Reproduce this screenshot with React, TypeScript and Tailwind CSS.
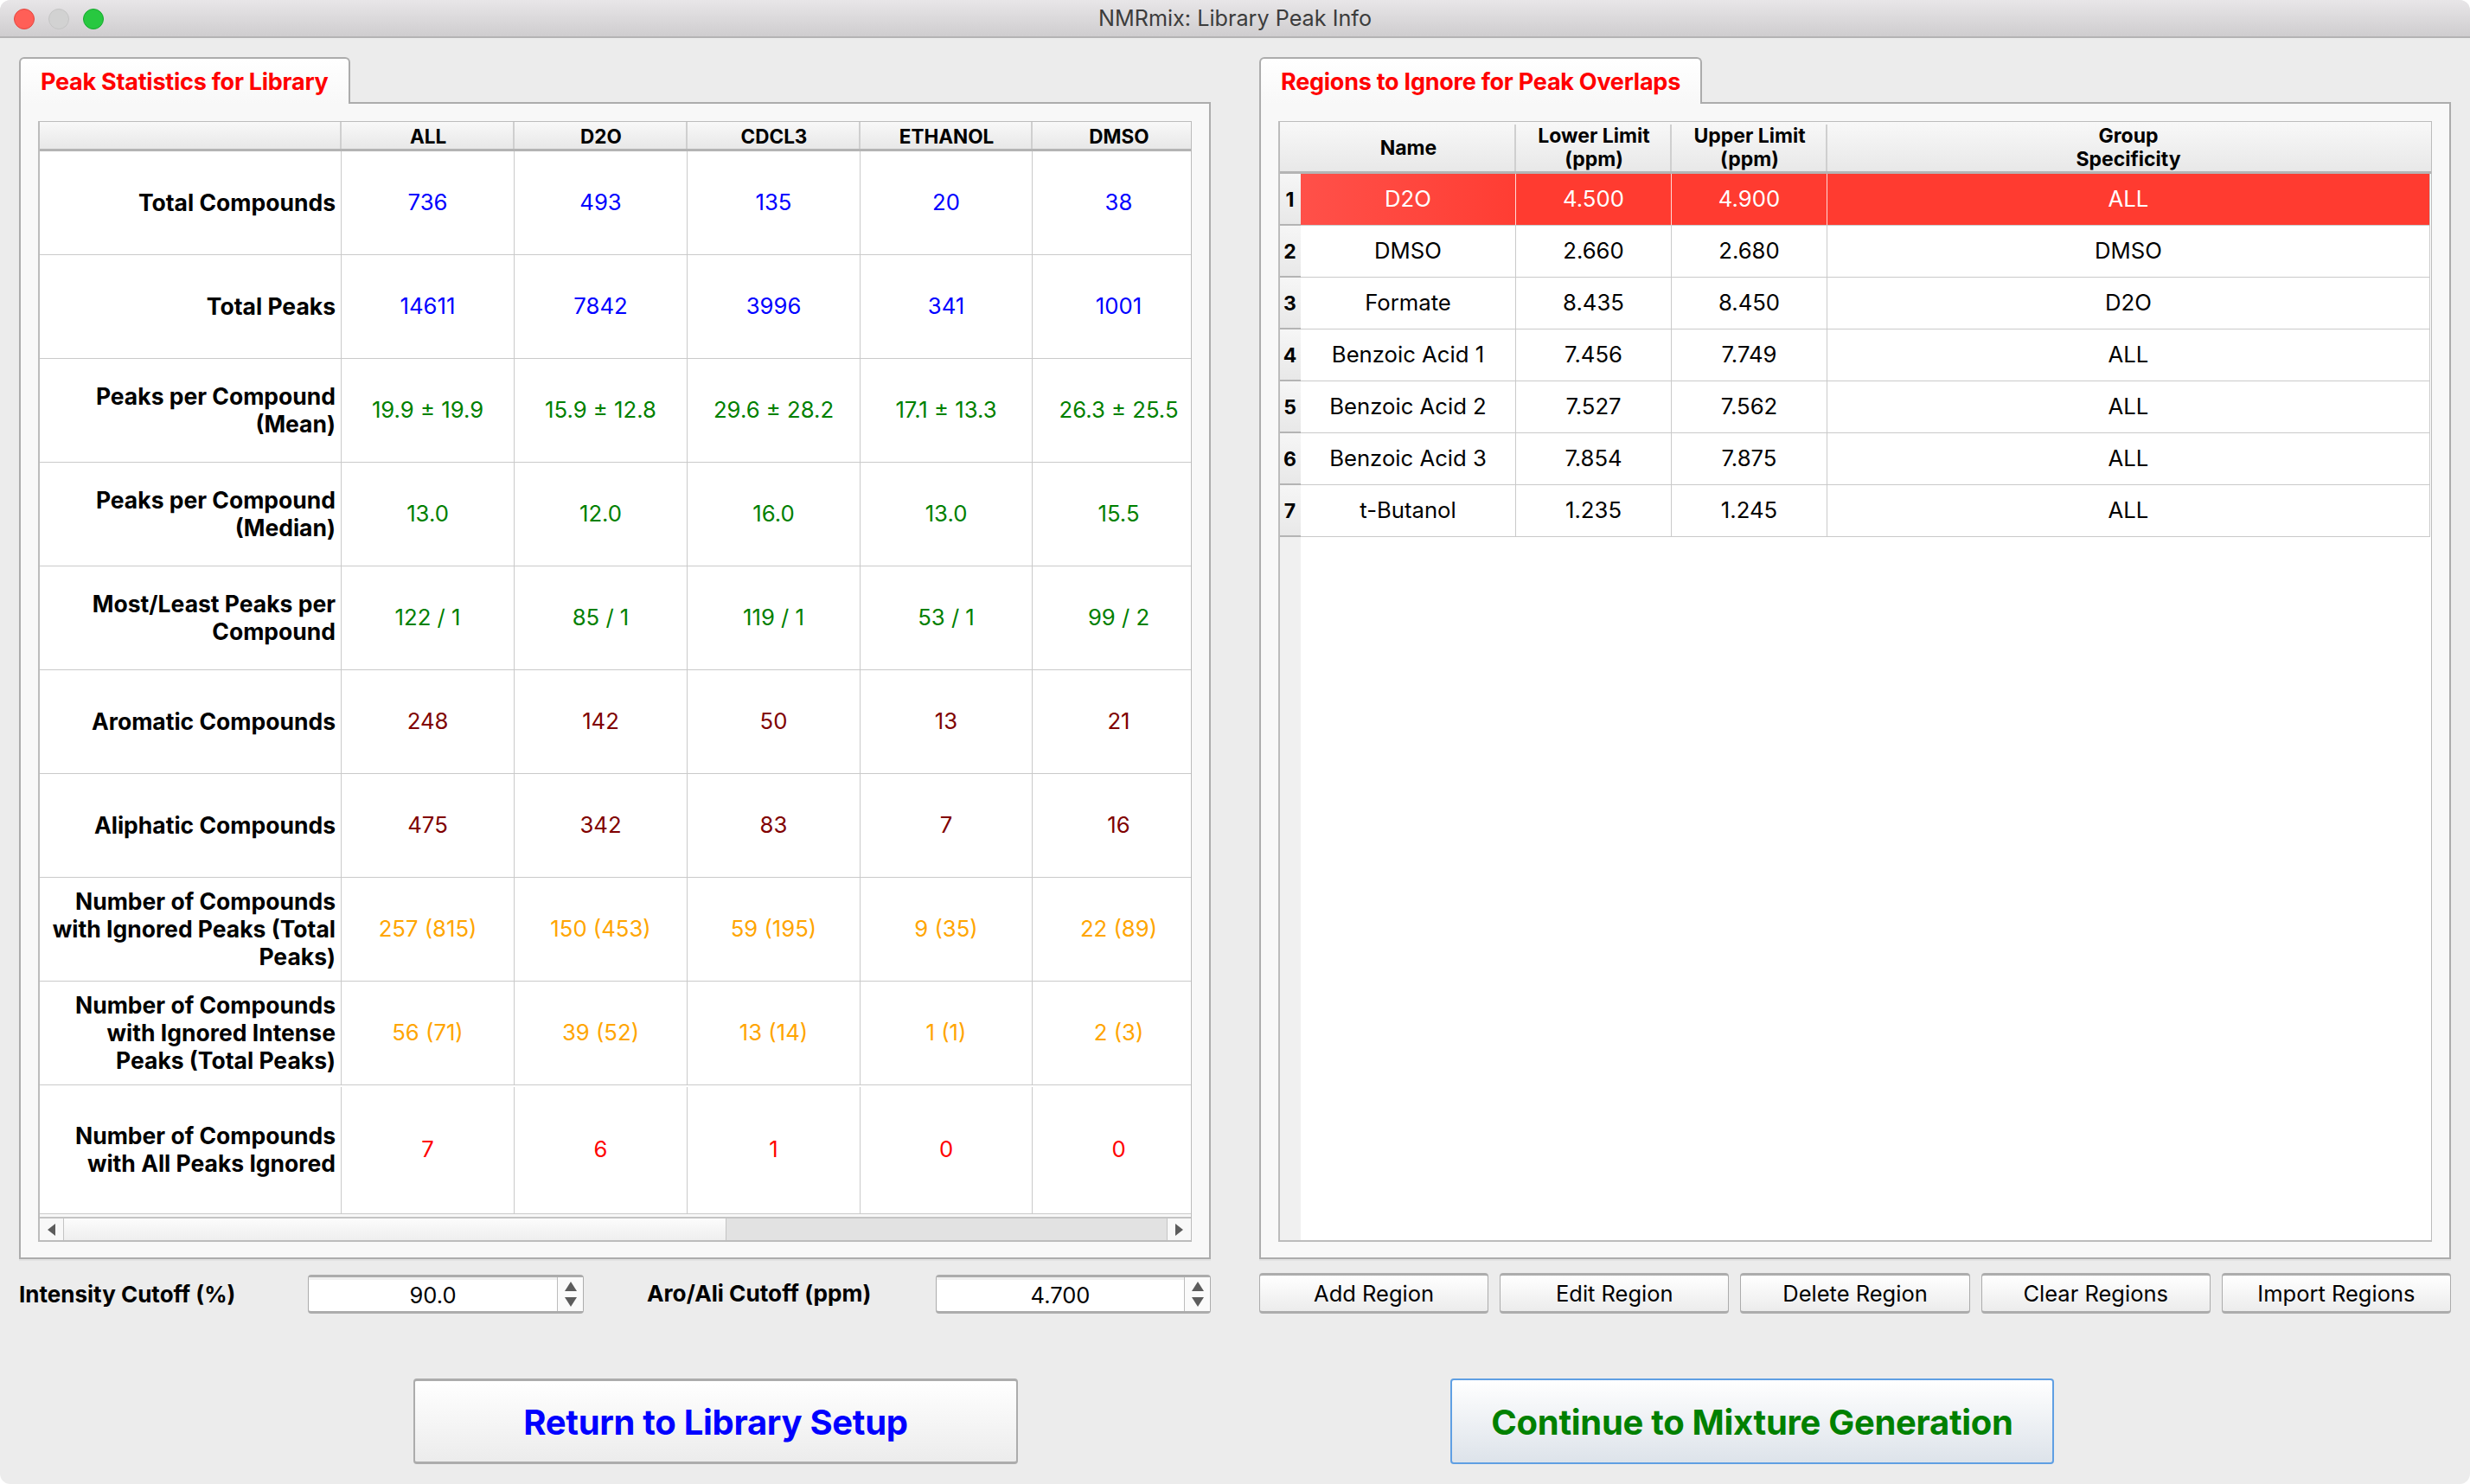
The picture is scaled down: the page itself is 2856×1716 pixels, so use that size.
const font = { fontFamily: "Inter, 'Noto Sans', sans-serif" };

const statRows = [
  { label: ["Total Compounds"], values: ["736", "493", "135", "20", "38"], color: "text-[#0000ff]" },
  { label: ["Total Peaks"], values: ["14611", "7842", "3996", "341", "1001"], color: "text-[#0000ff]" },
  { label: ["Peaks per Compound", "(Mean)"], values: ["19.9 ± 19.9", "15.9 ± 12.8", "29.6 ± 28.2", "17.1 ± 13.3", "26.3 ± 25.5"], color: "text-[#008000]" },
  { label: ["Peaks per Compound", "(Median)"], values: ["13.0", "12.0", "16.0", "13.0", "15.5"], color: "text-[#008000]" },
  { label: ["Most/Least Peaks per", "Compound"], values: ["122 / 1", "85 / 1", "119 / 1", "53 / 1", "99 / 2"], color: "text-[#008000]" },
  { label: ["Aromatic Compounds"], values: ["248", "142", "50", "13", "21"], color: "text-[#800000]" },
  { label: ["Aliphatic Compounds"], values: ["475", "342", "83", "7", "16"], color: "text-[#800000]" },
  { label: ["Number of Compounds", "with Ignored Peaks (Total", "Peaks)"], values: ["257 (815)", "150 (453)", "59 (195)", "9 (35)", "22 (89)"], color: "text-[#ffa500]" },
  { label: ["Number of Compounds", "with Ignored Intense", "Peaks (Total Peaks)"], values: ["56 (71)", "39 (52)", "13 (14)", "1 (1)", "2 (3)"], color: "text-[#ffa500]" },
  { label: ["Number of Compounds", "with All Peaks Ignored"], values: ["7", "6", "1", "0", "0"], color: "text-[#ff0000]", tall: true },
];

const statHeaders = ["ALL", "D2O", "CDCL3", "ETHANOL", "DMSO"];

const regions = [
  ["D2O", "4.500", "4.900", "ALL"],
  ["DMSO", "2.660", "2.680", "DMSO"],
  ["Formate", "8.435", "8.450", "D2O"],
  ["Benzoic Acid 1", "7.456", "7.749", "ALL"],
  ["Benzoic Acid 2", "7.527", "7.562", "ALL"],
  ["Benzoic Acid 3", "7.854", "7.875", "ALL"],
  ["t-Butanol", "1.235", "1.245", "ALL"],
];

const regionButtons = ["Add Region", "Edit Region", "Delete Region", "Clear Regions", "Import Regions"];

function Tab({ title }: { title: string }) {
  return (
    <div className="relative z-10 -mb-[2px] flex h-[54px] w-fit items-center rounded-t-md border-2 border-b-0 border-[#acacac] bg-gradient-to-b from-white to-[#f8f8f8] px-[23px] text-[27px] font-bold leading-none tracking-[-0.25px] text-[#ff0000]">
      {title}
    </div>
  );
}

function Spinner({ value, width }: { value: string; width: string }) {
  return (
    <div className={`flex h-[45px] ${width} rounded-[4px] border border-b-[3px] border-t-[3px] border-[#acacac] bg-white`}>
      <div className="flex flex-1 items-center justify-center border-t-[3px] border-[#f0f0f0] text-[25.5px] leading-none text-black">
        {value}
      </div>
      <div className="flex w-[30px] flex-col items-center justify-center gap-[7px] border-l border-[#bdbdbd] bg-[#fafafa]">
        <svg width="14" height="11" viewBox="0 0 14 11"><path d="M7 0 14 11H0Z" fill="#5c5c5c" /></svg>
        <svg width="14" height="11" viewBox="0 0 14 11"><path d="M7 11 14 0H0Z" fill="#5c5c5c" /></svg>
      </div>
    </div>
  );
}

function StatsTable() {
  return (
    <div className="flex h-[1296px] flex-col overflow-hidden border-b-2 border-l-2 border-r border-t border-[#bcbcbc] bg-[#f8f8f8]">
      <div className="grid h-[34px] shrink-0 grid-cols-[349px_200px_200px_200px_199px_200px] border-b-[3px] border-[#b4b4b4] bg-gradient-to-b from-[#f8f8f8] to-[#e8e8e8] text-[22.5px] font-bold leading-none text-black">
        <div className="border-r-2 border-[#cfcfcf]" />
        {statHeaders.map((h) => (
          <div key={h} className="flex items-center justify-center border-r-2 border-[#cfcfcf] pl-[2px] pt-[3px]">
            {h}
          </div>
        ))}
      </div>
      {statRows.map((row) => (
        <div
          key={row.label[0] + row.values[0]}
          className={`grid shrink-0 grid-cols-[349px_200px_200px_200px_199px_200px] border-b border-[#cacaca] bg-white ${row.tall ? "h-[149px] pt-[2px]" : "h-[120px]"}`}
        >
          <div className="flex flex-col items-end justify-center border-r border-[#cacaca] pb-[2px] pr-[6px] text-right text-[26.5px] font-bold leading-[32px] text-black">
            {row.label.map((line) => (
              <div key={line} className="whitespace-nowrap">{line}</div>
            ))}
          </div>
          {row.values.map((v, i) => (
            <div key={i} className={`flex items-center justify-center border-r border-[#cacaca] pb-[2px] text-[25.7px] leading-none ${row.color}`}>
              {v}
            </div>
          ))}
        </div>
      ))}
      <div className="mt-[3px] flex h-[28px] shrink-0 border-t-2 border-[#c4c4c4] bg-[#e2e2e2]">
        <div className="flex w-[28px] items-center justify-center border-r border-[#c4c4c4] bg-[#f8f8f8]">
          <svg width="9" height="14" viewBox="0 0 9 14"><path d="M0 7 9 0V14Z" fill="#5c5c5c" /></svg>
        </div>
        <div className="w-[766px] border-r border-[#c4c4c4] bg-gradient-to-b from-[#fcfcfc] to-[#eeeeee]" />
        <div className="flex-1" />
        <div className="flex w-[28px] items-center justify-center border-l border-[#c4c4c4] bg-[#f8f8f8]">
          <svg width="9" height="14" viewBox="0 0 9 14"><path d="M9 7 0 0V14Z" fill="#5c5c5c" /></svg>
        </div>
      </div>
    </div>
  );
}

function RegionsTable() {
  return (
    <div className="relative flex h-[1296px] flex-col overflow-hidden border-b-2 border-l-2 border-r border-t border-[#bcbcbc] bg-white">
      <div className="grid h-[60px] shrink-0 grid-cols-[273px_180px_180px_1fr] border-b-[3px] border-[#b4b4b4] bg-gradient-to-b from-[#f8f8f8] to-[#e8e8e8] pt-[3px] text-[23px] font-bold leading-[27px] text-black">
        <div className="flex items-center justify-center border-r-2 border-[#cfcfcf] pl-[26px]">Name</div>
        <div className="flex items-center justify-center border-r-2 border-[#cfcfcf] pl-[2px] text-center">Lower Limit<br />(ppm)</div>
        <div className="flex items-center justify-center border-r-2 border-[#cfcfcf] pl-[2px] text-center">Upper Limit<br />(ppm)</div>
        <div className="flex items-center justify-center pr-[2px] text-center">Group<br />Specificity</div>
      </div>
      <div className="flex flex-1">
        <div className="flex w-[24px] shrink-0 flex-col bg-[#f0f0f0]">
          {regions.map((_, i) => (
            <div key={i} className="flex h-[60px] items-center justify-center border-b-[2px] border-[#b4b4b4] bg-gradient-to-b from-[#f6f6f6] to-[#e8e8e8] pr-[1px] pt-[3px] text-[23px] font-bold leading-none text-black">
              {i + 1}
            </div>
          ))}
        </div>
        <div className="w-[1306px] shrink-0 self-start border-r border-[#cacaca]">
          {regions.map((r, i) => (
            <div
              key={r[0]}
              className={`grid h-[60px] grid-cols-[249px_180px_180px_696px] border-b border-[#cacaca] text-[25.7px] leading-none ${i === 0 ? "bg-[#ff3b30] text-white" : "text-black"}`}
            >
              {r.map((cell, j) => (
                <div
                  key={j}
                  className={`flex items-center justify-center pb-[2px] ${j < 3 ? (i === 0 ? "border-r border-[#ffd9d6]" : "border-r border-[#cacaca]") : ""} ${i === 0 && j === 0 ? "bg-gradient-to-r from-[#ff5049] to-[#ff3d33]" : ""}`}
                >
                  {cell}
                </div>
              ))}
            </div>
          ))}
        </div>
      </div>
    </div>
  );
}

function Pane({ title, children }: { title: string; children: React.ReactNode }) {
  return (
    <div>
      <Tab title={title} />
      <div className="h-[1338px] border-2 border-[#acacac] bg-[#f8f8f8] px-[20px] pt-[20px] shadow-[0_2px_0_#e2e2e2]">
        {children}
      </div>
    </div>
  );
}

export default function App() {
  return (
    <div style={font} className="h-[1716px] w-[2856px] overflow-hidden bg-white">
      <div className="flex h-full flex-col overflow-hidden rounded-[12px] bg-[#ececec]">
        <div className="relative flex h-[44px] shrink-0 items-center justify-center border-b-2 border-[#b4b3b4] bg-gradient-to-b from-[#e8e6e8] to-[#cfcdcf] pt-[2px] text-[25.2px] leading-none text-[#3c3c3c]">
          <div className="absolute left-[16px] top-[10px] flex gap-[16px]">
            <span className="h-[24px] w-[24px] rounded-full border border-[#e2463f] bg-[#ff5f57]" />
            <span className="h-[24px] w-[24px] rounded-full border border-[#c4c4c4] bg-[#d2d2d2]" />
            <span className="h-[24px] w-[24px] rounded-full border border-[#17a92e] bg-[#28c840]" />
          </div>
          NMRmix: Library Peak Info
        </div>

        <div className="flex gap-[56px] px-[22px] pt-[22px]">
          <div className="w-[1378px]">
            <Pane title="Peak Statistics for Library">
              <StatsTable />
            </Pane>
            <div className="mt-[18px] flex h-[45px] items-center">
              <div className="w-[334px] text-[26px] font-bold leading-none text-black">Intensity Cutoff (%)</div>
              <Spinner value="90.0" width="w-[319px]" />
              <div className="ml-[73px] w-[334px] text-[26.2px] font-bold leading-none text-black">Aro/Ali Cutoff (ppm)</div>
              <Spinner value="4.700" width="w-[318px]" />
            </div>
            <button className="ml-[456px] mt-[75px] flex h-[99px] w-[699px] items-center justify-center rounded-[4px] border-2 border-b-[3px] border-t-[3px] border-[#acacac] bg-gradient-to-b from-white to-[#ececec] pt-[2px] text-[40px] font-bold leading-none tracking-[-0.3px] text-[#0000ff]">
              Return to Library Setup
            </button>
          </div>

          <div className="w-[1378px]">
            <Pane title="Regions to Ignore for Peak Overlaps">
              <RegionsTable />
            </Pane>
            <div className="mt-[16px] flex h-[47px] gap-[13px]">
              {regionButtons.map((b) => (
                <button key={b} className="flex flex-1 items-center justify-center rounded-[4px] border border-b-[3px] border-t-[3px] border-[#acacac] bg-gradient-to-b from-white to-[#ececec] pt-[1px] text-[25.5px] leading-none text-black">
                  {b}
                </button>
              ))}
            </div>
            <button className="ml-[221px] mt-[75px] flex h-[99px] w-[698px] items-center justify-center rounded-[4px] border-2 border-[#5f9fe3] bg-gradient-to-b from-white to-[#dde3ea] pt-[2px] text-[40px] font-bold leading-none tracking-[-0.3px] text-[#008000]">
              Continue to Mixture Generation
            </button>
          </div>
        </div>
      </div>
    </div>
  );
}
